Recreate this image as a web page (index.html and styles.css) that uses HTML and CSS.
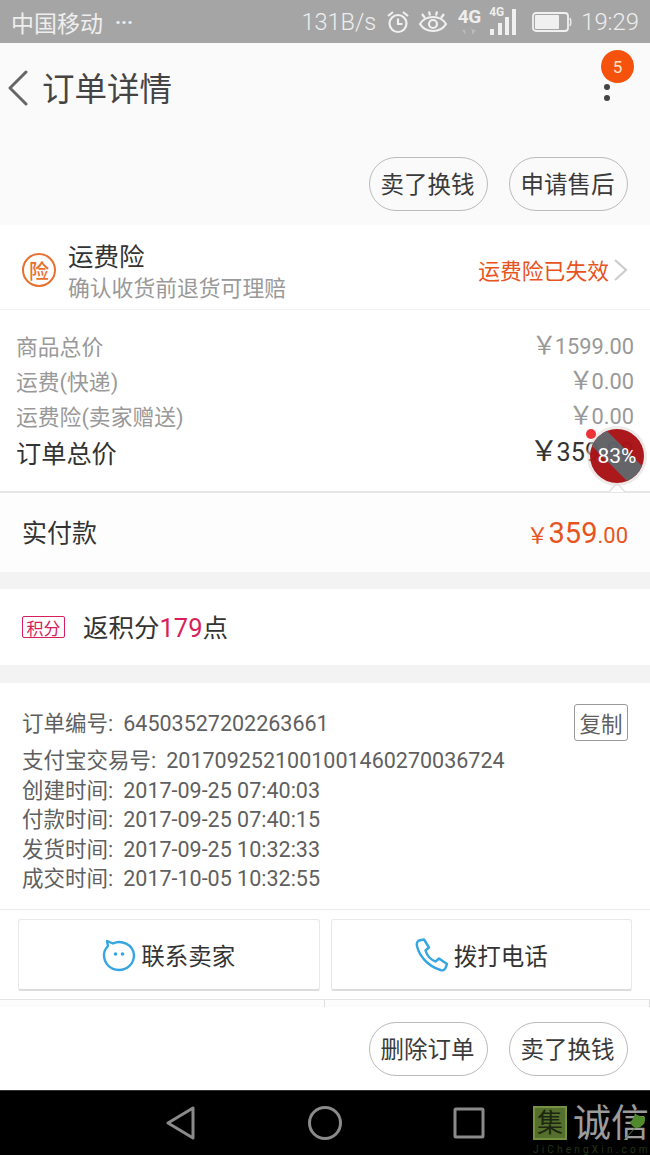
FILE: index.html
```html
<!DOCTYPE html>
<html lang="zh-CN">
<head>
    <meta charset="UTF-8">
    <meta name="viewport" content="width=device-width, initial-scale=1.0">
    <title>订单详情</title>
    <link rel="stylesheet" href="styles.css">
</head>
<body>
    <div class="status-bar">
        <span class="carrier">中国移动</span>
        <span class="carrier-dots">···</span>
        <span class="status-right">
            <span class="speed">131B/s</span>
            <svg class="icon-alarm" width="26" height="26" viewBox="0 0 26 26" fill="none" stroke="#f0f0f0" stroke-width="2.2">
                <circle cx="13" cy="14.5" r="8.5"/>
                <path d="M13 9.5v5.5h4.5M3 7l5-4M23 7l-5-4"/>
            </svg>
            <svg class="icon-eye" width="30" height="24" viewBox="0 0 30 24" fill="none" stroke="#f0f0f0" stroke-width="2.2">
                <path d="M2 14c3-5 8-7 13-7s10 2 13 7c-3 5-8 7-13 7s-10-2-13-7z"/>
                <circle cx="15" cy="14" r="4"/>
                <path d="M4 4l3 4M11 1.500l1 4M19 1.500l-1 4M26 4l-3 4"/>
            </svg>
            <span class="net">
                <b class="net-big">4G</b>
                <svg width="16" height="9" viewBox="0 0 16 9" fill="#bbb"><path d="M4 0v3H1l3.500 5zM9 0l3.500 3H15L11 8V3z"/></svg>
            </span>
            <span class="signal">
                <b class="net-small">4G</b>
                <svg width="27" height="26" viewBox="0 0 27 26" fill="#f0f0f0">
                    <rect x="0" y="20" width="4" height="6"/>
                    <rect x="8" y="14" width="4" height="12"/>
                    <rect x="15" y="8" width="4" height="18"/>
                    <rect x="22" y="0" width="4" height="26"/>
                </svg>
            </span>
            <svg class="icon-battery" width="40" height="20" viewBox="0 0 40 20">
                <rect x="1" y="1" width="35" height="18" rx="3" fill="none" stroke="#f0f0f0" stroke-width="1.800"/>
                <rect x="3" y="3" width="24" height="14" rx="1" fill="#f0f0f0"/>
                <path d="M38 6c1 2 1 6 0 8" fill="none" stroke="#f0f0f0" stroke-width="1.500"/>
            </svg>
            <span class="clock">19:29</span>
        </span>
    </div>

    <div class="top-area">
        <div class="nav">
            <svg class="back" width="22" height="36" viewBox="0 0 22 36" fill="none" stroke="#666" stroke-width="3" stroke-linecap="round" stroke-linejoin="round">
                <path d="M19 2L3 18l16 16"/>
            </svg>
            <h1>订单详情</h1>
            <div class="more">
                <i></i><i></i>
            </div>
        </div>
        <div class="actions">
            <span class="pill">卖了换钱</span>
            <span class="pill">申请售后</span>
        </div>
    </div>

    <div class="insurance">
        <span class="insurance-badge">险</span>
        <div class="insurance-text">
            <div class="insurance-title">运费险</div>
            <div class="insurance-sub">确认收货前退货可理赔</div>
        </div>
        <span class="insurance-state">运费险已失效</span>
        <svg class="insurance-arrow" width="16" height="24" viewBox="0 0 16 24" fill="none" stroke="#ccc" stroke-width="2.200"><path d="M2 2l11 10L2 22"/></svg>
    </div>

    <div class="prices">
        <div class="price-row"><span>商品总价</span><span><i class="yen">￥</i>1599.00</span></div>
        <div class="price-row"><span>运费(快递)</span><span><i class="yen">￥</i>0.00</span></div>
        <div class="price-row"><span>运费险(卖家赠送)</span><span><i class="yen">￥</i>0.00</span></div>
        <div class="price-row total"><span>订单总价</span><span><i class="yen">￥</i>359.00</span></div>
    </div>

    <div class="paid">
        <span class="paid-label">实付款</span>
        <span class="paid-amount">￥<b>359</b>.00</span>
    </div>

    <div class="points">
        <span class="points-tag">积分</span>
        <span class="points-text">返积分<em>179</em>点</span>
    </div>

    <div class="info">
        <div class="info-first">
            <span class="info-order"><span class="info-label">订单编号:</span>64503527202263661</span>
            <span class="copy">复制</span>
        </div>
        <div class="info-line"><span class="info-label">支付宝交易号:</span>2017092521001001460270036724</div>
        <div class="info-line"><span class="info-label">创建时间:</span>2017-09-25 07:40:03</div>
        <div class="info-line"><span class="info-label">付款时间:</span>2017-09-25 07:40:15</div>
        <div class="info-line"><span class="info-label">发货时间:</span>2017-09-25 10:32:33</div>
        <div class="info-line"><span class="info-label">成交时间:</span>2017-10-05 10:32:55</div>
    </div>

    <div class="contact">
        <div class="contact-btn">
            <svg width="34" height="34" viewBox="0 0 34 34" fill="none" stroke="#35a6e3" stroke-width="2.400">
                <path d="M5 3l6 2.500C19 1.500 31 6 32 17c0 9-7 15-15 15C8 32 2 25 2 17c0-4 2-7 4-9z" stroke-linejoin="round"/>
                <circle cx="13.500" cy="16" r="1.800" fill="#35a6e3" stroke="none"/>
                <circle cx="20.500" cy="16" r="1.800" fill="#35a6e3" stroke="none"/>
            </svg>
            <span>联系卖家</span>
        </div>
        <div class="contact-btn">
            <svg width="34" height="34" viewBox="0 0 34 34" fill="none" stroke="#35a6e3" stroke-width="2.400" stroke-linejoin="round">
                <path d="M4 2.500l5-1 5 8-3.500 3c1.500 5 5 9 10 11l3.500-3 8 5.500-1.500 4c-1 2-3 3-5 2C12 28 4 17 2 8c-.5-2.500 0-4.500 2-5.500z"/>
            </svg>
            <span>拨打电话</span>
        </div>
    </div>

    <div class="stub"><div></div><div></div></div>

    <div class="bottom-actions">
        <span class="pill">删除订单</span>
        <span class="pill">卖了换钱</span>
    </div>

    <div class="system-nav">
        <svg width="32" height="34" viewBox="0 0 32 34" fill="none" stroke="#8a8a8a" stroke-width="3" stroke-linejoin="round"><path d="M28 2v30L3 17z"/></svg>
        <svg width="34" height="34" viewBox="0 0 34 34" fill="none" stroke="#8a8a8a" stroke-width="3"><circle cx="17" cy="17" r="15.500"/></svg>
        <svg width="32" height="32" viewBox="0 0 32 32" fill="none" stroke="#8a8a8a" stroke-width="3" stroke-linejoin="round"><rect x="2" y="2" width="28" height="28" rx="1"/></svg>
    </div>

    <!-- floating things that sit over the page -->
    <span class="badge">5</span>

    <div class="float-meter">
        <svg width="72" height="72" viewBox="0 0 72 72">
            <defs>
                <clipPath id="meter-clip"><circle cx="36" cy="33" r="27"/></clipPath>
            </defs>
            <path d="M28 69l8-9 8 9" fill="#fff" stroke="#e2e2e2" stroke-width="1.500"/>
            <circle cx="36" cy="33" r="30" fill="#e0d8d8" fill-opacity="0.55"/>
            <g opacity="0.94">
                <circle cx="36" cy="33" r="27" fill="#a80c10"/>
                <g clip-path="url(#meter-clip)">
                    <path d="M18 0l54 54v18H60L0 12V0z" fill="#5c5c62"/>
                </g>
            </g>
            <circle cx="10" cy="11" r="5" fill="#ee3338"/>
        </svg>
        <span class="float-label">83%</span>
    </div>

    <div class="watermark">
        <div class="watermark-logo">
            <span class="watermark-box">集</span>
            <span class="watermark-text">诚信</span>
            <svg class="watermark-leaf" width="24" height="30" viewBox="0 0 24 30"><path d="M12 1c2 3 6 3 10 4 1 6-3 11-9 11-3-1-5-3-6-6 3-2 4-5 5-9z" fill="#4f8a2c"/><path d="M13 15L1 28" stroke="#4f7a35" stroke-width="1"/></svg>
        </div>
        <div class="watermark-url">JiChengXin.com</div>
    </div>
</body>
</html>
```

FILE: styles.css
```css
:root {
    --text-dark: #333;
    --text-mid: #5f5f5f;
    --text-light: #999;
    --orange: #e8541e;
    --line: #f1f1f1;
}

* {
    box-sizing: border-box;
}

body {
    position: relative;
    width: 650px;
    height: 1155px;
    margin: 0;
    overflow: hidden;
    display: flex;
    flex-direction: column;
    background-color: #fff;
    color: var(--text-dark);
    font-family: Roboto, "Noto Sans CJK SC", sans-serif;
}

.status-bar {
    height: 43px;
    flex: none;
    display: flex;
    align-items: center;
    padding: 0 11px 0 11px;
    background-color: #a5a5a5;
    color: #eee;
    font-size: 23px;
}

.carrier-dots {
    margin-left: 12px;
    font-size: 20px;
    font-weight: bold;
}

.status-right {
    margin-left: auto;
    display: flex;
    align-items: center;
}

.speed {
    font-size: 23.500px;
    font-weight: 300;
    margin-right: 9px;
}

.icon-eye {
    margin-left: 7px;
}

.net {
    width: 24px;
    margin-left: 9px;
    display: flex;
    flex-direction: column;
    align-items: center;
    line-height: 1;
}

.net-big {
    font-size: 19px;
    height: 20px;
    letter-spacing: -0.5px;
}

.signal {
    position: relative;
    margin-left: 8px;
    display: flex;
}

.signal svg {
    margin-left: 1px;
    margin-top: 1px;
}

.net-small {
    position: absolute;
    left: 0;
    top: -2px;
    font-size: 12px;
    line-height: 1;
}

.icon-battery {
    margin-left: 15px;
}

.clock {
    margin-left: 9px;
    font-size: 23.800px;
    font-weight: 300;
}

.top-area {
    height: 182px;
    flex: none;
    background-color: #fafafa;
}

.nav {
    height: 90px;
    display: flex;
    align-items: center;
    padding: 0 40px 0 7px;
}

h1 {
    margin: 0 0 4px 13px;
    font-size: 32.500px;
    font-weight: normal;
    color: #444;
}

.more {
    margin-left: auto;
    margin-top: 9px;
    display: flex;
    flex-direction: column;
    gap: 5px;
}

.more i {
    width: 6px;
    height: 6px;
    border-radius: 50%;
    background-color: #444;
}

.actions,
.bottom-actions {
    display: flex;
    justify-content: flex-end;
    gap: 21px;
    padding: 0 22px;
}

.actions {
    padding-top: 24px;
}

.bottom-actions {
    height: 83px;
    flex: none;
    padding-top: 15px;
}

.pill {
    width: 119px;
    height: 54px;
    padding: 0 2px 2px 0;
    display: flex;
    align-items: center;
    justify-content: center;
    border: 1px solid #bbb;
    border-radius: 27px;
    font-size: 23.500px;
    color: #3a3a3a;
}

.insurance {
    height: 85px;
    flex: none;
    display: flex;
    align-items: center;
    padding: 0 21px 0 22px;
    border-bottom: 1px solid var(--line);
}

.insurance-badge {
    width: 34px;
    height: 34px;
    margin-top: 6px;
    display: flex;
    align-items: center;
    justify-content: center;
    border: 2px solid #e8702e;
    border-radius: 50%;
    color: #e8702e;
    font-size: 20px;
    font-weight: 500;
}

.insurance-text {
    margin-left: 12px;
    margin-top: 10px;
}

.insurance-title {
    font-size: 25.500px;
    line-height: 32px;
}

.insurance-sub {
    font-size: 21.800px;
    line-height: 31px;
    color: var(--text-light);
}

.insurance-state {
    margin-left: auto;
    margin-right: 4px;
    margin-top: 4px;
    font-size: 21.800px;
    color: var(--orange);
}

.insurance-arrow {
    margin-top: 6px;
}

.prices {
    height: 183px;
    flex: none;
    padding: 18px 16px 0;
    border-bottom: 2px solid #e6e6e6;
}

.price-row {
    height: 35px;
    display: flex;
    align-items: center;
    justify-content: space-between;
    font-size: 21.800px;
    color: var(--text-light);
}

.price-row.total {
    height: 38px;
    font-size: 25.200px;
    color: var(--text-dark);
}

.yen {
    margin-right: -2px;
    font-size: 1.150em;
    font-style: normal;
    line-height: 1;
}

.paid {
    height: 79px;
    flex: none;
    display: flex;
    align-items: center;
    justify-content: space-between;
    padding: 0 22px;
    background-color: #fdfdfd;
    font-size: 25px;
}

.paid-label {
    margin-bottom: 3px;
}

.paid-amount {
    color: var(--orange);
    font-size: 22px;
}

.paid-amount b {
    font-size: 29px;
    font-weight: normal;
}

.points {
    height: 76px;
    flex: none;
    margin-top: 17px;
    display: flex;
    align-items: center;
    gap: 18px;
    padding: 0 22px;
    font-size: 25.500px;
    box-shadow: 0 -17px 0 #f3f3f3;
}

.points-text {
    margin-bottom: 3px;
}

.points em {
    font-style: normal;
    color: #d81e5b;
}

.points-tag {
    width: 43px;
    height: 22px;
    display: flex;
    align-items: center;
    justify-content: center;
    border: 1px solid #d81e5b;
    border-radius: 2px;
    color: #d81e5b;
    font-size: 17px;
}

.info {
    height: 244px;
    flex: none;
    padding: 20px 22px 0;
    border-top: 18px solid #f3f3f3;
    font-size: 21.500px;
    color: var(--text-mid);
}

.info-first {
    height: 38px;
    margin-bottom: 5px;
    display: flex;
    align-items: center;
    justify-content: space-between;
}

.info-order {
    margin-bottom: 2px;
}

.info-label {
    margin-right: 10px;
}

.info-line {
    height: 29.500px;
    line-height: 29.500px;
}

.copy {
    width: 54px;
    height: 37px;
    display: flex;
    align-items: center;
    justify-content: center;
    border: 1.500px solid #9a9a9a;
    border-radius: 3px;
}

.contact {
    height: 91px;
    flex: none;
    display: flex;
    gap: 11px;
    padding: 9px 18px 0;
    border-top: 1px solid #ececec;
    border-bottom: 1px solid #e4e4e4;
}

.contact-btn {
    flex: 1;
    height: 72px;
    display: flex;
    align-items: center;
    justify-content: center;
    gap: 5px;
    border: 1px solid #e8e8e8;
    border-bottom: 2px solid #dcdcdc;
    border-radius: 3px;
    font-size: 23.500px;
}

.stub {
    height: 7px;
    flex: none;
    display: flex;
    background-color: #fcfcfc;
}

.stub div {
    flex: 1;
    border-right: 1px solid #ddd;
}

.system-nav {
    height: 65px;
    flex: none;
    display: flex;
    align-items: center;
    padding-left: 165px;
    background-color: #000;
    border-top: 1px solid #333;
}

.system-nav svg:nth-child(2),
.system-nav svg:nth-child(3) {
    margin-left: 111px;
}

.badge {
    position: absolute;
    left: 601px;
    top: 50px;
    width: 33px;
    height: 33px;
    display: flex;
    align-items: center;
    justify-content: center;
    border-radius: 50%;
    background-color: #f4520d;
    color: #ffe9c8;
    font-size: 17px;
}

.float-meter {
    position: absolute;
    left: 581px;
    top: 423px;
    width: 72px;
    height: 72px;
}

.float-label {
    position: absolute;
    left: 0;
    width: 72px;
    top: 21px;
    text-align: center;
    color: #fff;
    font-size: 21px;
    line-height: 24px;
}

.watermark {
    position: absolute;
    left: 533px;
    top: 1106px;
    width: 117px;
}

.watermark-logo {
    position: relative;
    display: flex;
    align-items: center;
}

.watermark-box {
    width: 34px;
    height: 34px;
    display: flex;
    align-items: center;
    justify-content: center;
    border: 2px solid #76913f;
    background-color: #55702c;
    color: #1c2610;
    font-size: 26px;
    line-height: 1;
}

.watermark-text {
    margin-left: 6px;
    color: #9c9c9c;
    font-size: 38px;
    line-height: 33px;
    white-space: nowrap;
}

.watermark-leaf {
    position: absolute;
    right: 3px;
    top: 6px;
}

.watermark-url {
    margin-top: 4px;
    color: #24361a;
    font-size: 10px;
    letter-spacing: 3.200px;
    line-height: 12px;
    white-space: nowrap;
}
```
